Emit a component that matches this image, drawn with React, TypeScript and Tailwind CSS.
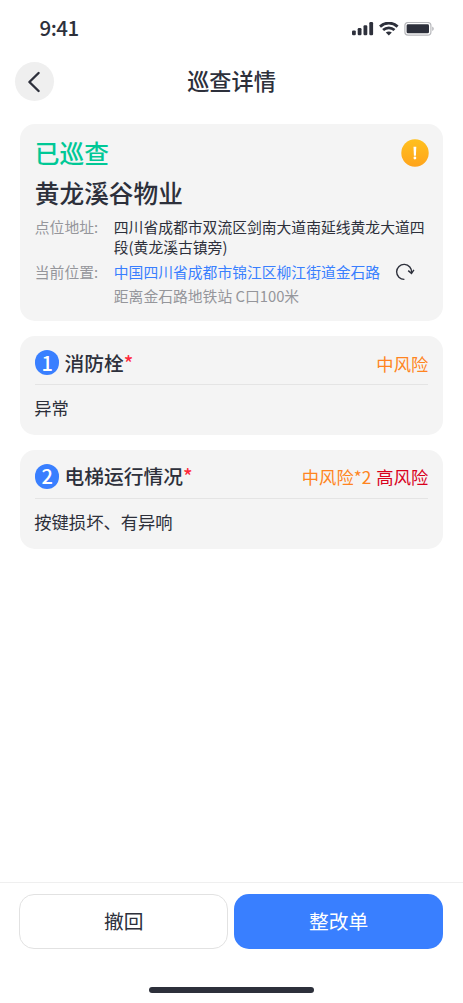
import React from 'react';

interface Risk {
  label: string;
  level: 'middle' | 'high';
}

interface CheckItem {
  title: string;
  result: string;
  risks: Risk[];
}

const items: CheckItem[] = [
  {
    title: '消防栓',
    result: '异常',
    risks: [{ label: '中风险', level: 'middle' }],
  },
  {
    title: '电梯运行情况',
    result: '按键损坏、有异响',
    risks: [
      { label: '中风险*2', level: 'middle' },
      { label: '高风险', level: 'high' },
    ],
  },
];

function StatusBar() {
  return (
    <div className="flex h-[57px] items-center justify-between pl-[39.5px] pr-[28px]">
      <span className="pb-[3px] text-[20.5px] leading-[24px] font-medium tracking-[-0.5px]">9:41</span>
      <div className="flex items-center">
        <svg width="22" height="14" viewBox="0 0 22 14" fill="#2d303b">
          <rect x="0" y="8.4" width="3.8" height="4.9" rx="1.2" />
          <rect x="5.7" y="6" width="3.8" height="7.3" rx="1.2" />
          <rect x="11.5" y="3.2" width="3.8" height="10.1" rx="1.2" />
          <rect x="17.3" y="0.1" width="3.8" height="13.2" rx="1.2" />
        </svg>
        <svg className="ml-[5px]" width="20" height="14" viewBox="0 0 20 14" fill="none" stroke="#2d303b">
          <path d="M1 4.6C6.1 -.1 13.5 -.1 18.6 4.6" strokeWidth="2.8" />
          <path d="M4.1 8.1C7.4 5 12.2 5 15.5 8.1" strokeWidth="2.7" />
          <path d="M6.8 10.6C8.6 9.1 11 9.1 12.8 10.6L9.8 13.6Z" fill="#2d303b" stroke="none" />
        </svg>
        <svg className="ml-[5px]" width="31" height="14" viewBox="0 0 31 14">
          <rect x="0.9" y="0.5" width="26" height="12.6" rx="3.2" fill="none" stroke="#2d303b" strokeOpacity="0.35" strokeWidth="1.2" />
          <rect x="2.6" y="2.3" width="22.4" height="9" rx="1.4" fill="#2d303b" />
          <path d="M28.3 4.6C30.2 5.4 30.2 8.3 28.3 9.1Z" fill="#2d303b" fillOpacity="0.4" />
        </svg>
      </div>
    </div>
  );
}

function Header() {
  return (
    <header className="grid h-[49px] grid-cols-[40px_1fr_40px] items-center px-[14.5px]">
      <button className="flex h-[39.5px] w-[39.5px] items-center justify-center rounded-full bg-[#efefef]">
        <svg width="24" height="24" viewBox="0 0 24 24" fill="none" stroke="#2d303b" strokeWidth="2.4" strokeLinecap="round" strokeLinejoin="round">
          <path d="M16.6 3 7.4 12l9.2 9" />
        </svg>
      </button>
      <h1 className="-mt-[4px] text-center text-[22.2px] leading-[30px] font-medium">巡查详情</h1>
    </header>
  );
}

function SummaryCard() {
  return (
    <section className="h-[197.5px] rounded-[15px] bg-[#f4f4f4] pr-[14px] pl-[15px] pt-[15px]">
      <div className="flex h-[29px] items-center justify-between">
        <span className="pb-[2px] text-[24.7px] leading-[29px] font-medium text-[#00c896]">已巡查</span>
        <svg width="28" height="28" viewBox="0 0 28 28">
          <defs>
            <linearGradient id="warn" x1="0" y1="0" x2="0" y2="1">
              <stop offset="0" stopColor="#ffc01e" />
              <stop offset="1" stopColor="#ffa41c" />
            </linearGradient>
          </defs>
          <circle cx="14" cy="14" r="13.7" fill="url(#warn)" />
          <path d="M12.5 7.8h2.8l-.4 9h-2z" fill="#fff" />
          <circle cx="13.9" cy="19" r="1.4" fill="#fff" />
        </svg>
      </div>
      <h2 className="mt-[9px] text-[24.7px] leading-[30px] font-medium">黄龙溪谷物业</h2>
      <dl className="mt-[10.5px] grid grid-cols-[79px_1fr] text-[14.8px] leading-[20px]">
        <dt className="text-[#95969b]">点位地址:</dt>
        <dd>四川省成都市双流区剑南大道南延线黄龙大道四段(黄龙溪古镇旁)</dd>
        <dt className="mt-[4.5px] text-[#95969b]">当前位置:</dt>
        <dd className="mt-[4.5px] flex items-center text-[#397fff]">
          中国四川省成都市锦江区柳江街道金石路
          <svg className="ml-[15px]" width="20" height="20" viewBox="0 0 20 20" fill="none" stroke="#2d303b" strokeWidth="1.4">
            <path d="M9.4 17.4A7.5 7.5 0 1 1 16.6 10.6" />
            <path d="M13.2 8.6 16.5 11.4l2.4-3.6" />
          </svg>
        </dd>
        <dd className="col-start-2 mt-[4.5px] text-[#95969b]">距离金石路地铁站 C口100米</dd>
      </dl>
    </section>
  );
}

function ItemCard({ item, index }: { item: CheckItem; index: number }) {
  return (
    <section className="h-[98.8px] rounded-[15px] bg-[#f4f4f4] px-[15px]">
      <div className="flex h-[49.4px] items-center border-b border-[#e4e4e4] pt-[5px]">
        <span className="flex h-[24.7px] w-[24.7px] items-center justify-center rounded-full bg-[#397fff] text-[20px] leading-[24px] font-medium text-white">
          {index}
        </span>
        <h3 className="ml-[5px] text-[19.75px] leading-[24px] font-medium">
          {item.title}
          <span className="text-[#ff2a3c]">*</span>
        </h3>
        <div className="ml-auto flex gap-[5px] pt-[2px] text-[17.3px] leading-[24px]">
          {item.risks.map((risk) => (
            <span key={risk.label} className={risk.level === 'high' ? 'text-[#d9001b]' : 'text-[#ff8420]'}>
              {risk.label}
            </span>
          ))}
        </div>
      </div>
      <p className="-ml-[0.5px] mt-[11px] text-[17.3px] leading-[24px]">{item.result}</p>
    </section>
  );
}

export default function App() {
  return (
    <div className="flex h-[1003px] w-[463px] flex-col overflow-hidden bg-white font-['Noto_Sans_CJK_SC',sans-serif] text-[#2d303b]">
      <StatusBar />
      <Header />
      <main className="flex flex-1 flex-col gap-[15px] px-[19.8px] pt-[17.5px]">
        <SummaryCard />
        {items.map((item, i) => (
          <ItemCard key={item.title} item={item} index={i + 1} />
        ))}
      </main>
      <footer className="h-[121px] border-t border-[#efefef] pt-[11px]">
        <div className="mr-[20px] ml-[19.4px] grid h-[55px] grid-cols-2 gap-[6px] text-[19.75px]">
          <button className="rounded-[15px] border border-[#e2e2e2] pb-[2px]">撤回</button>
          <button className="rounded-[15px] bg-[#397fff] pb-[2px] text-white">整改单</button>
        </div>
        <div className="mx-auto mt-[38px] h-[6px] w-[165px] rounded-full bg-[#2d303b]" />
      </footer>
    </div>
  );
}
